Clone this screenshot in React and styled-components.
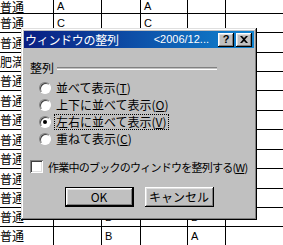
import styled, { createGlobalStyle } from "styled-components";

const GlobalStyle = createGlobalStyle`
    html, body {
        margin: 0;
        padding: 0;
        background: #FFFFFF;
        overflow: hidden;
    }
    body {
        width: 283px;
        height: 245px;
        position: relative;
    }
`;

const rowHeights = [14, 19, 20, 19, 19, 20, 19, 20, 19, 20, 19, 19, 19];

const rows = [
    ["普通", "A", "", "A", "", ""],
    ["普通", "C", "", "C", "", ""],
    ["普通", "", "", "", "", ""],
    ["肥満", "", "", "", "", ""],
    ["普通", "", "", "", "", ""],
    ["普通", "", "", "", "", ""],
    ["普通", "", "", "", "", ""],
    ["普通", "", "", "", "", ""],
    ["普通", "", "", "", "", ""],
    ["普通", "", "", "", "", ""],
    ["普通", "", "", "", "", ""],
    ["普通", "", "B", "", "B", ""],
    ["普通", "", "B", "", "A", ""],
];

const radios = [
    { label: "並べて表示", key: "T" },
    { label: "上下に並べて表示", key: "O" },
    { label: "左右に並べて表示", key: "V", checked: true },
    { label: "重ねて表示", key: "C" },
];

export default function App() {
    return (
        <>
            <GlobalStyle />
            <Sheet>
                {rows.map((row, r) => (
                    <Row key={r} height={rowHeights[r]}>
                        {row.map((text, c) => (
                            <Cell key={c} first={c === 0}>{text}</Cell>
                        ))}
                    </Row>
                ))}
            </Sheet>

            <Window>
                <TitleBar>
                    <Title>ウィンドウの整列</Title>
                    <SubTitle>&lt;2006/12...</SubTitle>
                    <CapButton>?</CapButton>
                    <CapButton close>
                        <svg width="8" height="7" viewBox="0 0 8 7">
                            <path d="M0 0h2l2 2 2-2h2L5 3.5 8 7H6L4 5 2 7H0l3-3.5z" fill="#000" />
                        </svg>
                    </CapButton>
                </TitleBar>

                <Body>
                    <GroupHeader>
                        <GroupLabel>整列</GroupLabel>
                        <GroupLine />
                    </GroupHeader>

                    <RadioList>
                        {radios.map((item) => (
                            <RadioRow key={item.key}>
                                <Radio checked={item.checked} />
                                <Label focused={item.checked}>
                                    {item.label}(<u>{item.key}</u>)
                                </Label>
                            </RadioRow>
                        ))}
                    </RadioList>

                    <CheckRow>
                        <CheckBox />
                        <Label narrow>作業中のブックのウィンドウを整列する(<u>W</u>)</Label>
                    </CheckRow>

                    <Buttons>
                        <Button primary>OK</Button>
                        <Button>キャンセル</Button>
                    </Buttons>
                </Body>
            </Window>
        </>
    );
}

const Sheet = styled.div`
    display: grid;
    grid-template-columns: 54px 48px 39px 47px 38px 70px;
`;

const Row = styled.div`
    display: contents;

    & > div {
        height: ${({height}) => height}px;
    }
`;

const Cell = styled.div`
    box-sizing: border-box;
    border-bottom: 1px solid #000000;
    border-right: 1px solid #000000;
    font-family: ${({first}) => first ? '"Noto Sans CJK JP", sans-serif' : '"Liberation Sans", Arial, sans-serif'};
    font-size: ${({first}) => first ? '12px' : '11px'};
    color: #000000;
    display: flex;
    align-items: center;
    padding-left: ${({first}) => first ? '0' : '3px'};
    line-height: 1;
`;

const Window = styled.div`
    position: absolute;
    left: 21px;
    top: 28px;
    width: 236px;
    height: 192px;
    box-sizing: border-box;
    background: #C0C0C0;
    padding: 3px 3px 2px 3px;
    box-shadow:
        inset -1px -1px #000000,
        inset 1px 1px #DFDFDF,
        inset -2px -2px #808080,
        inset 2px 2px #FFFFFF;
    display: flex;
    flex-direction: column;
    font-family: "Noto Sans CJK JP", sans-serif;
    font-size: 12px;
    color: #000000;
`;

const TitleBar = styled.div`
    height: 17px;
    background: linear-gradient(to right, #0A1E82, #1084D0);
    display: flex;
    align-items: center;
    padding: 0 2px 0 1px;
    color: #FFFFFF;
`;

const Title = styled.span`
    font-size: 12px;
    letter-spacing: -0.3px;
    line-height: 1;
    white-space: nowrap;
`;

const SubTitle = styled.span`
    margin-left: auto;
    margin-right: 9px;
    font-family: "Liberation Sans", Arial, sans-serif;
    font-size: 11px;
    line-height: 1;
    white-space: nowrap;
`;

const CapButton = styled.div`
    width: 16px;
    height: 14px;
    flex-shrink: 0;
    box-sizing: border-box;
    margin-left: ${({close}) => close ? '2px' : '0'};
    background: #C0C0C0;
    box-shadow:
        inset -1px -1px #000000,
        inset 1px 1px #FFFFFF,
        inset -2px -2px #808080,
        inset 2px 2px #DFDFDF;
    display: flex;
    align-items: center;
    justify-content: center;
    color: #000000;
    font-family: "Liberation Sans", Arial, sans-serif;
    font-weight: bold;
    font-size: 11px;
    line-height: 1;
    padding-bottom: 1px;
`;

const Body = styled.div`
    display: flex;
    flex-direction: column;
    padding: 0 0 0 6px;
`;

const GroupHeader = styled.div`
    margin-top: 13px;
    height: 14px;
    display: flex;
    align-items: center;
    padding-right: 37px;
`;

const GroupLabel = styled.span`
    line-height: 1;
    margin-right: 3px;
`;

const GroupLine = styled.div`
    flex: 1;
    height: 1px;
    border-top: 1px solid #808080;
    border-bottom: 1px solid #FFFFFF;
`;

const RadioList = styled.div`
    margin-top: 4px;
    display: flex;
    flex-direction: column;
`;

const RadioRow = styled.div`
    height: 17px;
    display: flex;
    align-items: center;
    padding-left: 9px;
`;

const Radio = styled.div`
    width: 12px;
    height: 12px;
    flex-shrink: 0;
    box-sizing: border-box;
    border-radius: 50%;
    background: #FFFFFF;
    border: 1px solid;
    border-color: #808080 #FFFFFF #FFFFFF #808080;
    box-shadow: inset 1px 1px #404040;
    margin-right: 4px;
    display: flex;
    align-items: center;
    justify-content: center;

    &::after {
        content: "";
        width: 4px;
        height: 4px;
        border-radius: 50%;
        background: #000000;
        display: ${({checked}) => checked ? 'block' : 'none'};
    }
`;

const Label = styled.span`
    line-height: 14px;
    padding: 0 1px;
    white-space: nowrap;
    font-size: ${({narrow}) => narrow ? '11px' : '12px'};
    letter-spacing: ${({narrow}) => narrow ? '-0.75px' : '0'};
    outline: ${({focused}) => focused ? '1px dotted #000000' : 'none'};

    u {
        text-decoration: underline;
        text-underline-offset: 1px;
    }
`;

const CheckRow = styled.div`
    margin-top: 11px;
    height: 17px;
    display: flex;
    align-items: center;
`;

const CheckBox = styled.div`
    width: 13px;
    height: 13px;
    flex-shrink: 0;
    box-sizing: border-box;
    background: #FFFFFF;
    box-shadow:
        inset 1px 1px #808080,
        inset -1px -1px #FFFFFF,
        inset 2px 2px #404040,
        inset -2px -2px #DFDFDF;
    margin-right: 4px;
`;

const Buttons = styled.div`
    margin-top: 12px;
    display: flex;
    justify-content: center;
    gap: 11px;
    padding-right: 6px;
`;

const Button = styled.div`
    width: 69px;
    height: 20px;
    box-sizing: border-box;
    background: #C0C0C0;
    border: ${({primary}) => primary ? '1px solid #000000' : 'none'};
    box-shadow:
        inset -1px -1px #000000,
        inset 1px 1px #FFFFFF,
        inset -2px -2px #808080,
        inset 2px 2px #DFDFDF;
    display: flex;
    align-items: center;
    justify-content: center;
    font-family: "Noto Sans CJK JP", sans-serif;
    font-size: 12px;
    line-height: 1;
`;
